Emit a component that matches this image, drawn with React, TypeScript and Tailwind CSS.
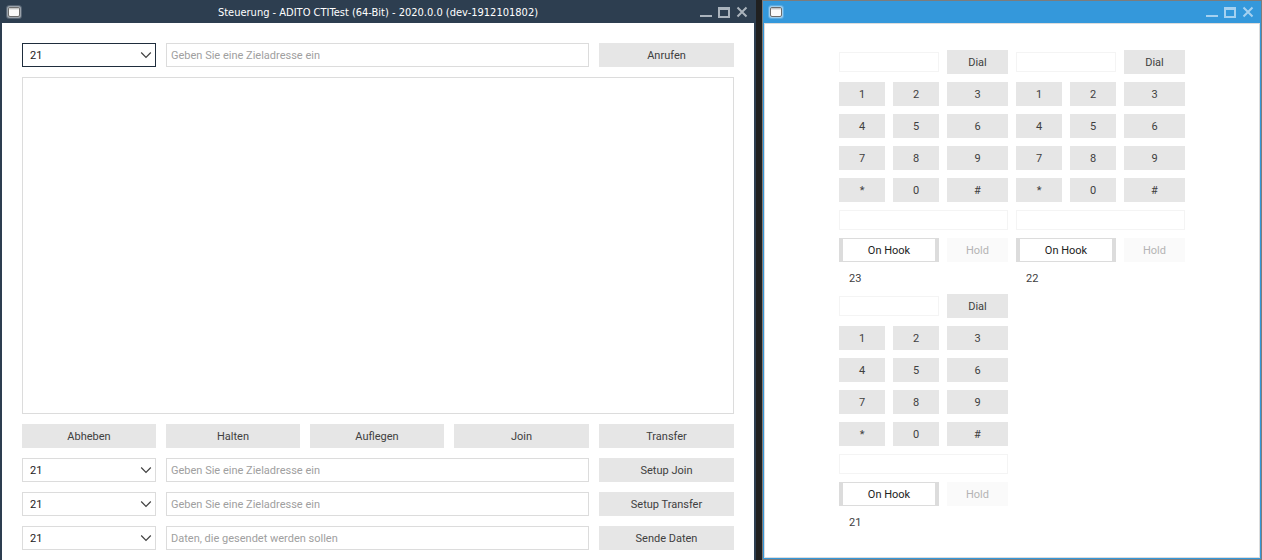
import React from 'react';
import { clsx } from 'clsx';

const BUTTON = 'h-6 w-full bg-[#e6e6e6] pt-0.5 text-center text-[#404040]';
const FIELD = 'h-6 w-full border border-[#dcdcdc] bg-white px-1 text-[#333] outline-none placeholder:text-[#a0a0a0] placeholder:opacity-100';
const COLUMNS = 'grid grid-cols-[134fr_134fr_134fr_135fr_135fr] gap-2.5';

function AppIcon() {
  return (
    <svg width="16" height="14" viewBox="0 0 16 14" aria-hidden="true">
      <rect x="0" y="0" width="16" height="14" rx="3.5" fill="#fff" opacity="0.2" />
      <rect x="1" y="1" width="14" height="12" rx="2.5" fill="#fff" opacity="0.4" />
      <rect x="2.5" y="2.5" width="11" height="9" rx="1.5" fill="#fafafa" stroke="#6c6c6c" />
      <path d="M3 3.500h10" stroke="#c4c4c4" />
      <path d="M3 4.500h10" stroke="#e4e4e4" />
    </svg>
  );
}

function WindowControls({ className }: { className: string }) {
  return (
    <div className={clsx('flex items-center gap-1.5', className)}>
      <button type="button" aria-label="Minimieren">
        <svg className="block" width="12" height="12" viewBox="0 0 12 12" fill="currentColor">
          <path d="M0 9h12v2H0z" />
        </svg>
      </button>
      <button type="button" aria-label="Maximieren">
        <svg className="block" width="12" height="12" viewBox="0 0 12 12" fill="currentColor">
          <path fillRule="evenodd" d="M0 1h12v11H0zM2 4v6h8V4z" />
        </svg>
      </button>
      <button type="button" aria-label="Schließen">
        <svg className="block" width="12" height="12" viewBox="0 0 12 12" fill="none" stroke="currentColor" strokeWidth="2">
          <path d="M1.500 1.500l9 9M10.500 1.500l-9 9" />
        </svg>
      </button>
    </div>
  );
}

function LineSelect({ label, active = false }: { label: string; active?: boolean }) {
  return (
    <div className="relative">
      <select
        aria-label={label}
        defaultValue="21"
        className={clsx(
          'h-6 w-full appearance-none border bg-white px-[7px] pt-0.5 text-[#222] outline-none',
          active ? 'border-[#1f2d3d]' : 'border-[#dcdcdc]',
        )}
      >
        <option>21</option>
        <option>22</option>
        <option>23</option>
      </select>
      <svg
        className="pointer-events-none absolute top-2 right-1"
        width="12"
        height="8"
        viewBox="0 0 12 8"
        fill="none"
        stroke="#404040"
        strokeWidth="1.200"
      >
        <path d="M1.200 1.500L6 6.300l4.800-4.800" />
      </svg>
    </div>
  );
}

interface ActionRowProps {
  action: string;
  placeholder: string;
  active?: boolean;
}

function ActionRow({ action, placeholder, active }: ActionRowProps) {
  return (
    <div className={COLUMNS}>
      <LineSelect label={`Leitung für ${action}`} active={active} />
      <input className={clsx(FIELD, 'col-span-3')} type="text" aria-label={placeholder} placeholder={placeholder} />
      <button type="button" className={BUTTON}>{action}</button>
    </div>
  );
}

function ControlWindow() {
  return (
    <section className="flex min-w-0 flex-col border-x-2 border-[#2d3e50] bg-white">
      <header className="grid h-[23px] grid-cols-[1fr_auto_1fr] items-center bg-[#2d3e50] px-1">
        <AppIcon />
        <h1 className="pt-0.5 font-['DejaVu_Sans_Condensed','Noto_Sans',sans-serif] text-white">Steuerung - ADITO CTITest (64-Bit) - 2020.0.0 (dev-1912101802)</h1>
        <WindowControls className="justify-end pr-0.5 text-[#aab3bc]" />
      </header>
      <div className="flex flex-1 flex-col gap-2.5 px-5 pt-5 pb-2.5">
        <ActionRow action="Anrufen" placeholder="Geben Sie eine Zieladresse ein" active />
        <textarea aria-label="Protokoll" className="block min-h-40 w-full flex-1 resize-none border border-[#dcdcdc] bg-white p-1 outline-none" />
        <div className={COLUMNS}>
          {['Abheben', 'Halten', 'Auflegen', 'Join', 'Transfer'].map((name) => (
            <button key={name} type="button" className={BUTTON}>{name}</button>
          ))}
        </div>
        <ActionRow action="Setup Join" placeholder="Geben Sie eine Zieladresse ein" />
        <ActionRow action="Setup Transfer" placeholder="Geben Sie eine Zieladresse ein" />
        <ActionRow action="Sende Daten" placeholder="Daten, die gesendet werden sollen" />
      </div>
    </section>
  );
}

const KEYS = ['1', '2', '3', '4', '5', '6', '7', '8', '9', '*', '0', '#'];

function Phone({ line }: { line: string }) {
  return (
    <section aria-label={`Telefon ${line}`} className="grid grid-cols-[46px_46px_61px] items-center gap-2">
      <input type="text" aria-label={`Rufnummer ${line}`} className="col-span-2 h-5 w-full border border-[#f4f4f4] px-1 outline-none" />
      <button type="button" className={BUTTON}>Dial</button>
      {KEYS.map((key) => (
        <button key={key} type="button" className={BUTTON}>{key}</button>
      ))}
      <input type="text" readOnly aria-label={`Status ${line}`} className="col-span-3 h-5 w-full border border-[#f4f4f4] px-1 outline-none" />
      <button type="button" className="col-span-2 h-6 border-x-4 border-y border-[#dcdcdc] bg-white pt-0.5 text-[#222]">On Hook</button>
      <button type="button" disabled className="h-6 bg-[#fafafa] pt-0.5 text-[#b4b4b4]">Hold</button>
      <p className="col-span-3 h-4 px-2.5 leading-[18px] text-[#404040]">{line}</p>
    </section>
  );
}

function PhoneWindow() {
  return (
    <section className="flex min-w-0 flex-col border border-[#7c7c7c] bg-[#3498db]">
      <header className="flex h-[22px] shrink-0 items-center justify-between px-[5px]">
        <AppIcon />
        <WindowControls className="pr-0.5 text-[#a5d1f0]" />
      </header>
      <div className="mx-px mb-px flex flex-1 items-start justify-center border border-[#dcdcdc] bg-white py-[26px]">
        <div className="grid grid-cols-[auto_auto] gap-2">
          <Phone line="23" />
          <Phone line="22" />
          <Phone line="21" />
        </div>
      </div>
    </section>
  );
}

export default function App() {
  return (
    <main className="grid min-h-screen grid-cols-[756fr_500fr] gap-1.5 bg-[#202020] font-['Roboto',sans-serif] text-[11px] leading-4">
      <ControlWindow />
      <PhoneWindow />
    </main>
  );
}
